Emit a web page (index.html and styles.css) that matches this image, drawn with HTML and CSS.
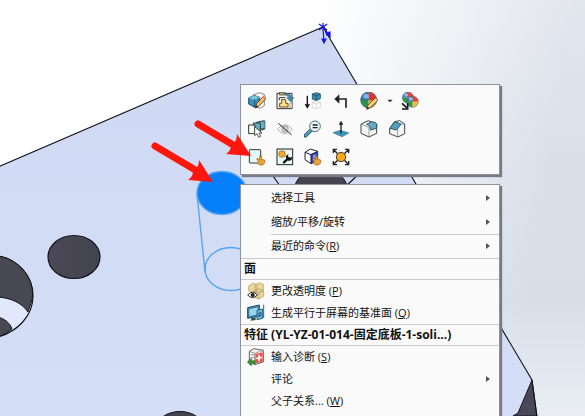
FILE: index.html
```html
<!DOCTYPE html>
<html lang="zh-CN">
<head>
<meta charset="utf-8">
<title>SolidWorks</title>
<link rel="stylesheet" href="styles.css">
</head>
<body>
<main class="viewport">
  <svg class="model" viewBox="0 0 585 416" preserveAspectRatio="xMinYMin slice" aria-hidden="true">
    <defs>
      <linearGradient id="face" x1="0" y1="0" x2="0" y2="1"><stop offset="0" stop-color="#d0d9f3"/><stop offset="1" stop-color="#d5def7"/></linearGradient>
      <linearGradient id="hole" x1="0" y1="0" x2="1" y2="0"><stop offset="0" stop-color="#4c4955"/><stop offset="1" stop-color="#42434f"/></linearGradient>
    </defs>
    <path d="M-2 167L323 27L533 380L518 416H-2Z" fill="url(#face)"/>
    <path d="M532 380L518 413L513 416H537Z" fill="#4a4758" stroke="#14141c"/>
    <path d="M-2 167L323 27L532 380L537 418" fill="none" stroke="#15151d" stroke-width="1.1"/>
    <path d="M271 173L280 186M360 173L346 186" fill="none" stroke="#15151d" stroke-width="1.2"/>
    <path d="M270 174h6l-2 4z" fill="#15151d"/>
    <ellipse cx="321" cy="193" rx="27.500" ry="25" fill="#454450" stroke="#15151d"/>
    <ellipse cx="74" cy="257" rx="26" ry="21.500" fill="url(#hole)" stroke="#15151d" stroke-width="1.2"/>
    <path d="M-2 256C18 259 33 276 33 296C33 317 16 332 -2 337Z" fill="#e2e8fb" stroke="#15151d" stroke-width="1.2"/>
    <path d="M-2 256C18 259 36 278 32 300Q28 312 28 312C22 303 11 298 -2 297Z" fill="#484853" stroke="#15151d"/>
    <path d="M-2 317C5 319 10 323 12 329Q6 334 -2 337Z" fill="#484853" stroke="#15151d"/>
    <ellipse cx="180" cy="427" rx="22" ry="15.500" fill="#454450" stroke="#15151d" stroke-width="1.2"/>
    <g stroke="#58a4ee" stroke-width="1.4" fill="none">
      <ellipse cx="222" cy="193" rx="25" ry="21.500" fill="#0580fa"/>
      <path d="M197 194L205 272"/>
      <ellipse cx="231" cy="269" rx="26" ry="21.500"/>
    </g>
    <g stroke="#1717e6" fill="none" stroke-width="1.2"><path d="M319 24l8 6M327 24l-8 6M323 23v8M323 29l1 13M324 27l6 10M326 31l1 5"/><path d="M322 39l2 4l2-4zM326 33l4 4v-5z" fill="#1717e6"/></g>
  </svg>

  <div class="toolbar" role="toolbar" aria-label="关联工具栏">
    <div class="row">
      <button aria-label="编辑零件"><svg viewBox="0 0 54 54"><path d="M17 8l17-6 15 5v34l-12 8-20-8z" fill="#f7f7f4" stroke="#555" stroke-width="2"/><path d="M2 18l16-8 16 6v22l-14 8-18-10z" fill="#3d93b8" stroke="#164f6b" stroke-width="3"/><path d="M2 18l16-8 16 6-14 7z" fill="#7bc4df"/><path d="M20 23v22" stroke="#164f6b" stroke-width="3"/><path d="M22 48l4-13 20-22 8 7-21 22z" fill="#f5c269" stroke="#553818" stroke-width="2.500"/><path d="M43 16l5-6 7 7-5 5z" fill="#e98269"/><path d="M22 49l3-9 5 5z" fill="#222"/></svg></button>
      <button aria-label="零部件属性"><svg viewBox="0 0 54 54"><path d="M3 4h45v46H3z" fill="#f4f4ef" stroke="#333" stroke-width="3"/><path d="M10 1h16v8H10z" fill="#c4a666" stroke="#333" stroke-width="2"/><path d="M10 17h18M10 17v8" stroke="#333" stroke-width="3"/><path d="M17 23h12v11h7v11H11V34h6z" fill="#ffe28a" stroke="#6b5016" stroke-width="3"/><path d="M28 5q17-2 18 12h8L43 29 32 17h6q-1-7-10-7z" fill="#408fae" stroke="#245d74" stroke-width="1.500"/><path d="M40 34h8v14h-8z" fill="#ddd" stroke="#777"/></svg></button>
      <button aria-label="压缩"><svg viewBox="0 0 54 54"><path d="M10 11v33M4 36l6 10 6-10" fill="none" stroke="#111" stroke-width="4"/><path d="M25 6l13-4 11 4v14l-12 6-12-5z" fill="#368eb0" stroke="#1b5269" stroke-width="2.500"/><path d="M25 6l12 5 12-5M37 11v14" fill="none" stroke="#174c65" stroke-width="2.500"/><path d="M25 31l13-4 11 4v14l-12 6-12-5zM25 31l12 5 12-5M37 36v14" fill="#fbfbfb" stroke="#c6cbc8" stroke-width="2"/></svg></button>
      <button aria-label="退回"><svg viewBox="0 0 54 54"><path d="M17 21h25v26" fill="none" stroke="#222" stroke-width="5"/><path d="M7 21L22 7v28z" fill="#222"/></svg></button>
      <button aria-label="外观"><svg viewBox="0 0 54 54"><path d="M26 24V0A24 24 0 0 0 2 24z" fill="#2d78c8"/><path d="M26 24V0A24 24 0 0 1 50 24z" fill="#df3535"/><path d="M26 24H2A24 24 0 0 0 26 48z" fill="#259c50"/><path d="M26 24H50A24 24 0 0 1 26 48z" fill="#f6b82f"/><path d="M26 0q-12 8-12 24t12 24M2 24h48" fill="none" stroke="#555" stroke-width="1.500"/><ellipse cx="18" cy="13" rx="8" ry="7" fill="#a3d4f5" opacity=".7"/><circle cx="26" cy="24" r="24" fill="none" stroke="#46535a" stroke-width="2"/><path d="M20 52l4-13 22-22 8 8-23 22z" fill="#f7cc76" stroke="#5b421d" stroke-width="2.500"/><path d="M20 52l3-8 5 5z" fill="#222"/></svg></button>
      <button class="more" aria-label="更多外观"><svg viewBox="0 0 18 18"><path d="M3 6h12l-6 6z" fill="#333"/></svg></button>
      <button aria-label="复制外观"><svg viewBox="0 0 54 54"><g id="ball"><path d="M21 17V0A17 17 0 0 0 4 17z" fill="#3475bd"/><path d="M21 17V0A17 17 0 0 1 38 17z" fill="#e3423b"/><path d="M21 17H4A17 17 0 0 0 21 34z" fill="#2f9b4e"/><path d="M21 17H38A17 17 0 0 1 21 34z" fill="#f4bd3b"/><circle cx="21" cy="17" r="17" fill="none" stroke="#59636b" stroke-width="1.500"/><ellipse cx="15" cy="9" rx="6" ry="5" fill="#b6def4" opacity=".7"/></g><use href="#ball" x="14" y="12"/><path d="M3 34l14 13M20 34v17H3" fill="none" stroke="#151515" stroke-width="5"/></svg></button>
    </div>
    <div class="row">
      <button aria-label="选择其他"><svg viewBox="0 0 54 54"><path d="M25 7l24-5v26l-21 5z" fill="#4d91a4" stroke="#27464e" stroke-width="2.500"/><path d="M34 4h17v22H34z" fill="#72afbd" stroke="#27464e" stroke-width="2"/><path d="M16 9h21v26H16z" fill="#69aabd" stroke="#27464e" stroke-width="3"/><path d="M2 15h19v26H2z" fill="#f6f8f8" stroke="#333" stroke-width="3"/><path d="M20 20v27l7-6 5 11 6-3-5-10h9z" fill="#fff" stroke="#333" stroke-width="2.500"/></svg></button>
      <button aria-label="隐藏零部件"><svg viewBox="0 0 54 54"><path d="M4 28q23-28 45 0q-23 26-45 0z" fill="#f5f5f5" stroke="#b4b4b4" stroke-width="3"/><circle cx="27" cy="27" r="10" fill="#c7c7c7" stroke="#999" stroke-width="2"/><path d="M7 10l40 35" stroke="#333" stroke-width="3"/></svg></button>
      <button aria-label="放大所选范围"><svg viewBox="0 0 54 54"><path d="M4 47l18-17" stroke="#235a74" stroke-width="11" stroke-linecap="round"/><path d="M5 46l17-16" stroke="#579fc0" stroke-width="6" stroke-linecap="round"/><circle cx="33" cy="19" r="16" fill="#e9f6f7" stroke="#596b70" stroke-width="3"/><path d="M26 15h15M26 23h15" stroke="#222" stroke-width="4"/></svg></button>
      <button aria-label="正视于"><svg viewBox="0 0 54 54"><path d="M3 38l22-7 25 8-20 11z" fill="#3d9bbd" stroke="#276b84" stroke-width="2"/><path d="M27 41V8" stroke="#222" stroke-width="4"/><path d="M27 2l-7 12h14z" fill="#222"/></svg></button>
      <button aria-label="圆角"><svg viewBox="0 0 54 54"><path d="M3 12L25 2l25 9v29L27 51 3 40z" fill="#f3f5f3" stroke="#444" stroke-width="3"/><path d="M3 12l24 10v29" fill="none" stroke="#777" stroke-width="2"/><path d="M20 13L34 5q14 2 16 7v13L31 30q1-13-11-17z" fill="#68a9be" stroke="#285c6a" stroke-width="3"/></svg></button>
      <button aria-label="倒角"><svg viewBox="0 0 54 54"><path d="M5 26L20 5 35 2 50 12v29L30 51 5 41z" fill="#f5f6f4" stroke="#444" stroke-width="3"/><path d="M29 28v22M36 13l14-1" stroke="#777" stroke-width="2"/><path d="M5 25L20 5l19 7-13 18z" fill="#579fb8" stroke="#285c6a" stroke-width="3"/></svg></button>
    </div>
    <div class="row">
      <button aria-label="选择面"><svg viewBox="0 0 54 54"><rect x="4" y="5" width="34" height="40" rx="2" fill="#e2fafb" stroke="#333" stroke-width="3"/><path id="hand" d="M26 33l4-2 5 5V24l5-1v10l10 3v9l-6 6H34l-6-7 3-3z" fill="#e9a333" stroke="#99631c" stroke-width="2"/></svg></button>
      <button aria-label="编辑特征"><svg viewBox="0 0 54 54"><rect x="3" y="3" width="47" height="47" fill="#e4fafb" stroke="#222" stroke-width="3"/><circle cx="18" cy="18" r="10" fill="#f9ae28" stroke="#8c591b" stroke-width="2"/><path d="M24 43l14-13" stroke="#111" stroke-width="7" stroke-linecap="round"/><path d="M37 18l-1 8 5 4 7-4-1 9-8 4-8-5-2-9z" fill="#111"/></svg></button>
      <button aria-label="选择实体"><svg viewBox="0 0 54 54"><path d="M3 13L19 3l22 7v29L21 47 3 35z" fill="#fafaff" stroke="#222" stroke-width="3"/><path d="M21 19l20-9v27l-20 10z" fill="#3241bc"/><path d="M27 22l8-4v21h-8z" fill="#8590ed"/><path d="M3 13l18 7v27M21 20l20-10" fill="none" stroke="#181b42" stroke-width="3"/><use href="#hand"/></svg></button>
      <button aria-label="选择特征"><svg viewBox="0 0 54 54"><path d="M4 15V4h11M39 4h11v11M4 39v11h11M39 50h11V39M5 5l12 12M49 5L37 17M5 49l12-12M49 49L37 37" fill="none" stroke="#222" stroke-width="4"/><circle cx="27" cy="27" r="14" fill="#f8a91b" stroke="#4b3820" stroke-width="3"/></svg></button>
    </div>
  </div>

  <div class="menu" role="menu">
    <div class="group roomy">
      <button class="item" role="menuitem"><span class="label">选择工具</span><i class="arrow"></i></button>
      <button class="item" role="menuitem"><span class="label">缩放/平移/旋转</span><i class="arrow"></i></button>
      <button class="item ruled" role="menuitem"><span class="label">最近的命令(<u>R</u>)</span><i class="arrow"></i></button>
    </div>
    <h2 class="heading">面</h2>
    <div class="group">
      <button class="item" role="menuitem">
        <svg class="icon" viewBox="0 0 54 54"><path d="M5 12l13-9 12 5v17l-13 7-12-5zM24 9l12-7 13 5v17l-12 7-13-5zM20 28l13-8 17 6v17l-15 8-15-6z" fill="#ead69a" stroke="#b49b61" stroke-width="2"/><path d="M20 28l15 6 15-8M35 34v16" fill="none" stroke="#b49b61" stroke-width="2"/><path d="M2 39q15-17 29 0q-14 16-29 0z" fill="#f3f3e8" stroke="#333" stroke-width="3"/><circle cx="17" cy="39" r="6" fill="#222"/></svg>
        <span class="label">更改透明度 (<u>P</u>)</span></button>
      <button class="item" role="menuitem">
        <svg class="icon" viewBox="0 0 54 54"><path d="M2 11l35-8v33L2 43z" fill="#3485aa" stroke="#274b5b" stroke-width="3"/><path d="M7 16l25-6v21L7 36z" fill="#9cd4ec"/><path d="M13 43l13-3v8l-15 2z" fill="#31505c"/><path d="M30 19l17-4v28l-17 4z" fill="#75bbdc" stroke="#235f88" stroke-width="3"/><path d="M35 27l7-2v11l-7 2zM50 2v40" fill="#438db9" stroke="#2d698e" stroke-width="3"/></svg>
        <span class="label">生成平行于屏幕的基准面 (<u>Q</u>)</span></button>
    </div>
    <h2 class="heading">特征 (YL-YZ-01-014-固定底板-1-soli...)</h2>
    <div class="group">
      <button class="item" role="menuitem">
        <svg class="icon" viewBox="0 0 54 54"><path d="M7 10L20 2l29 5v35L23 50 7 40z" fill="#f1efec" stroke="#666" stroke-width="3"/><path d="M7 10l16 6v32M23 16l26-9M11 20h11M11 29h11" fill="none" stroke="#777" stroke-width="2"/><path d="M25 18l22-5v28l-22 5z" fill="#ef5148"/><path d="M36 20v20M28 31l17-3" stroke="#fff" stroke-width="5"/><path d="M1 42l12-11v7h12v9H13v7z" fill="#38922d" stroke="#25651f" stroke-width="1.500"/></svg>
        <span class="label">输入诊断 (<u>S</u>)</span></button>
      <button class="item" role="menuitem"><span class="label">评论</span><i class="arrow"></i></button>
      <button class="item" role="menuitem"><span class="label">父子关系... (<u>W</u>)</span></button>
    </div>
  </div>

  <svg class="model pointers" viewBox="0 0 585 416" preserveAspectRatio="xMinYMin slice" aria-hidden="true">
    <g fill="#ff160c">
      <path d="M155 146L197 171" stroke="#ff160c" stroke-width="7" stroke-linecap="round"/>
      <path d="M213 182L188 180Q193 177 193 171Q199 168 199 160Z"/>
      <path d="M198 124L235 146" stroke="#ff160c" stroke-width="7" stroke-linecap="round"/>
      <path d="M251 156L226 154Q231 151 231 145Q237 142 237 134Z"/>
    </g>
  </svg>
</main>
</body>
</html>
```

FILE: styles.css
```css
* { box-sizing: border-box; }

body {
  margin: 0;
  font-family: "Open Sans", "Noto Sans CJK SC", sans-serif;
  font-size: 11px;
  color: #111;
}

.viewport {
  position: relative;
  height: 100vh;
  overflow: hidden;
  background:
    linear-gradient(100deg, #fff 0 48%, transparent 88%),
    linear-gradient(#e2e6ed, #dae0e9 40%, #d7dee8 72%, #eaeef4);
}

.model {
  position: absolute;
  inset: 0;
  width: 100%;
  height: 100%;
}

.pointers { pointer-events: none; }

button {
  margin: 0;
  padding: 0;
  border: 0;
  background: none;
  color: inherit;
  font: inherit;
}

.toolbar,
.menu {
  position: absolute;
  left: 240px;
  width: 260px;
  background: #fafafa;
  border: 1px solid #8e929b;
  box-shadow: 2px 2px 1px #777b88;
}

.toolbar {
  top: 84px;
  padding: 2px 2px 3px;
}

.row { display: flex; }

.row button {
  display: grid;
  place-items: center;
  width: 28px;
  height: 28px;
}

.row svg,
.icon {
  width: 18px;
  height: 18px;
}

.row .more { width: 13px; }

.row .more svg {
  width: 8px;
  height: 8px;
}

.menu {
  top: 184px;
  padding-top: 1px;
  padding-bottom: 24px;
}

.item {
  display: grid;
  grid-template-columns: 18px 1fr 5px;
  column-gap: 6px;
  align-items: center;
  width: 100%;
  height: 22px;
  padding: 0 8px 0 6px;
  text-align: left;
  line-height: 16px;
}

.roomy .item { height: 24px; }

.label {
  grid-column: 2;
  white-space: nowrap;
}

.ruled {
  background: linear-gradient(#c9c9cc, #c9c9cc) 30px 0 / 100% 1px no-repeat;
}

.arrow {
  grid-column: 3;
  border: 3px solid transparent;
  border-left: 4px solid #555;
  border-right: 0;
}

.heading {
  margin: 0;
  padding: 0 3px;
  border: solid #c9c9cc;
  border-width: 1px 0;
  font-size: 12px;
  font-weight: 700;
  line-height: 20px;
  white-space: nowrap;
}
```
